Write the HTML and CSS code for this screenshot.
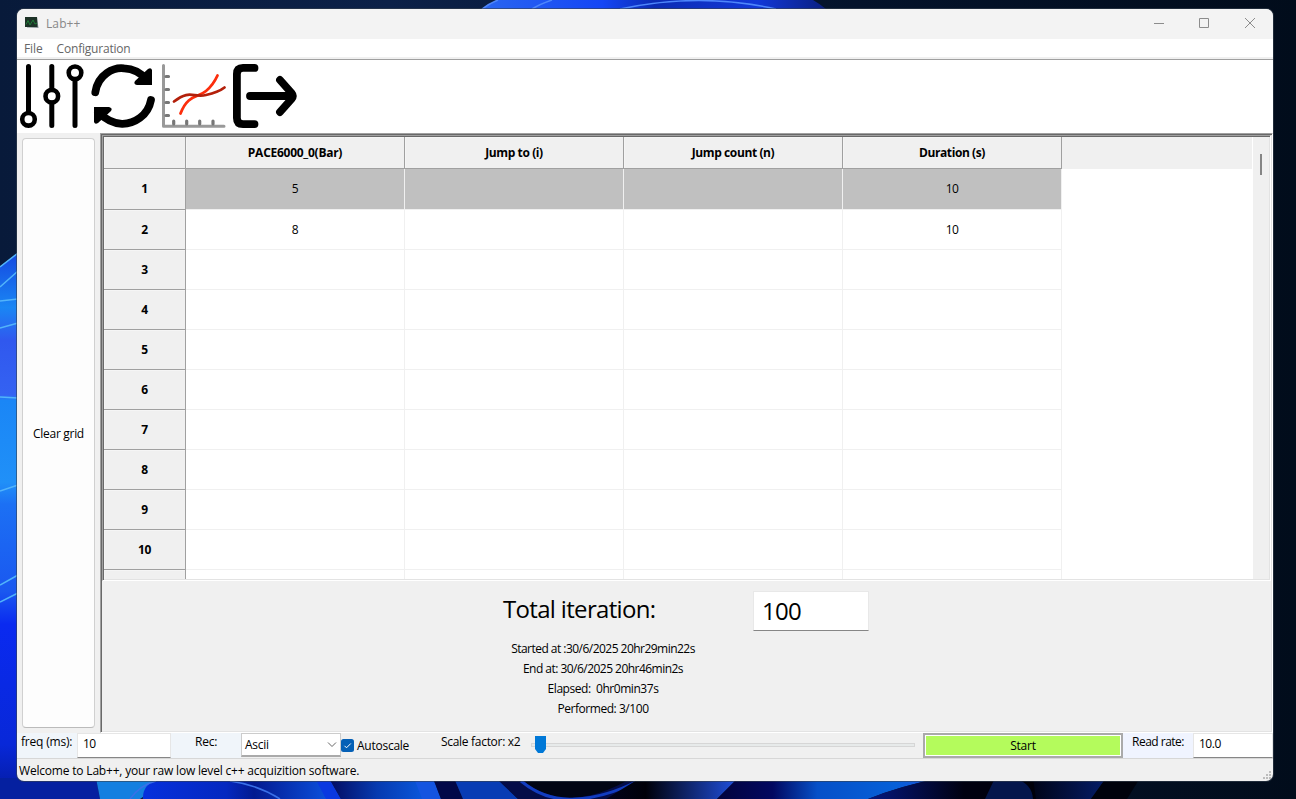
FILE: index.html
```html
<!DOCTYPE html>
<html lang="en">
<head>
<meta charset="utf-8">
<title>Lab++</title>
<link rel="stylesheet" href="styles.css">
</head>
<body>
<div class="desktop">
  <svg class="wallpaper" viewBox="0 0 1296 799" preserveAspectRatio="none">
    <defs>
      <linearGradient id="night" x1="0" x2="1"><stop offset="0" stop-color="#081a3a"/><stop offset=".3" stop-color="#0c2148"/><stop offset=".66" stop-color="#04132b"/><stop offset="1" stop-color="#010c1b"/></linearGradient>
      <linearGradient id="topBloom" x1="0" x2="1"><stop offset="0" stop-color="#2a66f0"/><stop offset=".35" stop-color="#1546f5"/><stop offset=".5" stop-color="#0c2cb4"/><stop offset=".8" stop-color="#1238d8"/><stop offset="1" stop-color="#0a1f80"/></linearGradient>
      <linearGradient id="leftBloom" x1="0" y1="0" x2="0" y2="1"><stop offset="0" stop-color="#1548e0"/><stop offset=".1" stop-color="#1a86f4"/><stop offset=".16" stop-color="#3058ee"/><stop offset=".26" stop-color="#3462f2"/><stop offset=".27" stop-color="#1a86f6"/><stop offset=".42" stop-color="#2090f8"/><stop offset=".46" stop-color="#1c70f4"/><stop offset=".62" stop-color="#1a58f0"/><stop offset=".68" stop-color="#0a2af0"/><stop offset=".9" stop-color="#0828d8"/><stop offset="1" stop-color="#041a9c"/></linearGradient>
      <linearGradient id="petalA" x1="0" x2="1"><stop offset="0" stop-color="#0630dc"/><stop offset=".45" stop-color="#0428c0"/><stop offset=".6" stop-color="#031a90"/><stop offset="1" stop-color="#0c50dc"/></linearGradient>
      <linearGradient id="petalB" x1="0" x2="1"><stop offset="0" stop-color="#030b60"/><stop offset=".5" stop-color="#063ab0"/><stop offset="1" stop-color="#0a58dc"/></linearGradient>
      <linearGradient id="petalC" x1="0" x2="1"><stop offset="0" stop-color="#01031c"/><stop offset=".3" stop-color="#000008"/><stop offset="1" stop-color="#2050e0"/></linearGradient>
      <linearGradient id="petalD" x1="0" x2="1"><stop offset="0" stop-color="#02033c"/><stop offset=".25" stop-color="#020860"/><stop offset=".45" stop-color="#0650c8"/><stop offset=".8" stop-color="#0660d8"/><stop offset="1" stop-color="#2450dc"/></linearGradient>
      <linearGradient id="petalE" x1="0" x2="1"><stop offset="0" stop-color="#041880"/><stop offset=".5" stop-color="#000010"/><stop offset="1" stop-color="#000008"/></linearGradient>
      <linearGradient id="petalF" x1="0" x2="1"><stop offset="0" stop-color="#000418"/><stop offset="1" stop-color="#041c68"/></linearGradient>
    </defs>
    <rect width="1296" height="799" fill="url(#night)"/>
    <path d="M482 9 Q490 3 498 0H813Q820 4 826 9Z" fill="url(#topBloom)"/>
    <path d="M482 9Q490 3 498 0M532 9Q540 4 552 0M620 9Q700-8 776 9" fill="none" stroke="#4e86fa" stroke-width="1.500"/>
    <path d="M0 267L18 253V799H0Z" fill="url(#leftBloom)"/>
    <path d="M0 267L18 253M0 287L18 271M0 301L18 299M0 328L18 323M0 397L18 398M0 491L18 485M0 585L18 575M0 602L18 593" fill="none" stroke="#52b4fa" stroke-width="1.500"/>
    <path d="M0 778H96L100 799H0Z" fill="#0520a0"/>
    <path d="M96 778H170L140 799H100Z" fill="#147fe0"/>
    <path d="M143 799Q142 784 160 778H320L328 799Z" fill="url(#petalA)"/>
    <path d="M130 799Q140 785 156 781M230 781Q258 785 280 799" fill="none" stroke="#3a70e8" stroke-width="1.500"/>
    <path d="M315 778H329L341 799H326Z" fill="#0a38e0"/>
    <path d="M329 778H416L425 799H341Z" fill="url(#petalB)"/>
    <path d="M414 778H433L441 799H422Z" fill="#1454e0"/>
    <path d="M433 778H454L463 799H441Z" fill="#020848"/>
    <path d="M454 778H496L518 799H463Z" fill="#083cb4"/>
    <path d="M496 778H650L610 799H518Z" fill="#040c48"/>
    <path d="M520 778H632Q590 802 558 797Q536 793 520 778Z" fill="#010514"/>
    <path d="M521 781Q545 801 575 799Q605 798 640 780" fill="none" stroke="#123cc0" stroke-width="3"/>
    <path d="M640 778H738L717 799H606Z" fill="url(#petalC)"/>
    <path d="M738 778H940Q900 786 868 799H717Z" fill="url(#petalD)"/>
    <path d="M940 778H1060V799H868Q900 786 940 778Z" fill="url(#petalE)"/>
    <path d="M995 778H1012Q1032 782 1033 799H985Z" fill="#04164c"/>
    <path d="M1033 778H1106L1091 799H1036Z" fill="url(#petalF)"/>
    <path d="M1106 778H1140L1127 799H1091Z" fill="#00020c"/>
  </svg>

  <main class="window">
    <header class="titlebar">
      <svg class="app-icon" viewBox="0 0 14 12"><path d="M1 1L12 0L13.500 11L2 10.500Z" fill="#8a9499"/><path d="M0 0H12L12.500 10H0Z" fill="#1c3226"/><path d="M1 7.500L3 3.500L5 8L8 3L10 7L12 6" fill="none" stroke="#1f7a36"/></svg>
      <span class="title">Lab++</span>
      <svg class="caption" viewBox="0 0 102 12"><path d="M0 6.500H10M45.500 1.500H54.500V10.500H45.500ZM91 1L101 11M101 1L91 11" fill="none" stroke="#8c8c8c"/></svg>
    </header>
    <nav class="menubar"><span>File</span><span class="config">Configuration</span></nav>
    <section class="toolbar">
      <svg class="tools" viewBox="0 0 300 73">
        <g fill="none" stroke="#000" stroke-linecap="round">
          <path d="M11.500 6.500V51M34.800 6.500V29M34.800 43V65.500M58 20V65.500" stroke-width="5"/>
          <g stroke-width="4.600"><circle cx="11.500" cy="59.300" r="6.300"/><circle cx="34.800" cy="36.200" r="6.300"/><circle cx="58" cy="12.800" r="6.300"/></g>
          <path d="M78.300 32.200C81 14 97 7 107 8.300C117 8.500 125 14 130 20M134 40C131 56 117 64 105 63.800C94 63.500 87 58 81 52" stroke-width="7.800"/>
          <path d="M237.500 7.900H226Q219.900 7.900 219.900 14V58Q219.900 64.100 226 64.100H237.500" stroke-width="7.800"/>
          <path d="M233 36H272M263 20L274.500 33Q277 36 274.500 39L263 52" stroke-width="7.800"/>
        </g>
        <path d="M135 10V25H120Q116 24 118 21L131 9Q134 7 135 10ZM77 62V47H92Q96 48 94 51L81 63Q78 65 77 62Z"/>
        <path d="M146.500 5.500V66.200H207" fill="none" stroke="#999" stroke-width="3" stroke-linecap="round" stroke-linejoin="round"/>
        <path d="M149 16.500H151.500M149 29.500H151.500M149 42.500H151.500M149 55.500H151.500M156.700 64V61M169.700 64V61M182.700 64V61M196 64V61" stroke="#777" stroke-width="3.200" stroke-linecap="round"/>
        <path d="M163.500 53.500C171 34 181 38 189 31C195 26 198 21 200.500 15.500" fill="none" stroke="#fc2e0d" stroke-width="2.800" stroke-linecap="round"/>
        <path d="M157 41.500C173 29 176 38 189 35C198 33 203 31 207.500 27.500" fill="none" stroke="#b3200b" stroke-width="2.800" stroke-linecap="round"/>
      </svg>
    </section>

    <div class="workspace">
      <aside class="side"><button class="clear">Clear grid</button></aside>
      <section class="panel">
        <div class="sheet">
          <div class="grid">
            <div class="row head"><b></b><b>PACE6000_0(Bar)</b><b>Jump to (i)</b><b>Jump count (n)</b><b>Duration (s)</b><i class="filler"></i></div>
            <div class="row selected"><b>1</b><span>5</span><span></span><span></span><span>10</span></div>
            <div class="row"><b>2</b><span>8</span><span></span><span></span><span>10</span></div>
            <div class="row"><b>3</b><span></span><span></span><span></span><span></span></div>
            <div class="row"><b>4</b><span></span><span></span><span></span><span></span></div>
            <div class="row"><b>5</b><span></span><span></span><span></span><span></span></div>
            <div class="row"><b>6</b><span></span><span></span><span></span><span></span></div>
            <div class="row"><b>7</b><span></span><span></span><span></span><span></span></div>
            <div class="row"><b>8</b><span></span><span></span><span></span><span></span></div>
            <div class="row"><b>9</b><span></span><span></span><span></span><span></span></div>
            <div class="row"><b>10</b><span></span><span></span><span></span><span></span></div>
            <div class="row"><b></b><span></span><span></span><span></span><span></span></div>
          </div>
          <div class="scrollbar"><div class="thumb"></div></div>
        </div>
        <div class="summary">
          <div class="progress">
            <h1>Total iteration:</h1>
            <p>Started at :30/6/2025 20hr29min22s</p>
            <p>End at: 30/6/2025 20hr46min2s</p>
            <p>Elapsed:&nbsp; 0hr0min37s</p>
            <p>Performed: 3/100</p>
          </div>
          <div class="total">100</div>
        </div>
      </section>
    </div>

    <section class="controls">
      <label class="tint freq">freq (ms):</label>
      <div class="field">10</div>
      <label class="tint rec">Rec:</label>
      <div class="combo"><span>Ascii</span><svg viewBox="0 0 10 6"><path d="M1 .5L5 4.500L9 .5" fill="none" stroke="#666"/></svg></div>
      <div class="check"><svg viewBox="0 0 13 13"><rect width="13" height="13" rx="2.500" fill="#0560b6"/><path d="M3.500 6.800L5.500 8.800L9.800 4.500" fill="none" stroke="#fff"/></svg><span>Autoscale</span></div>
      <label class="scale">Scale factor: x2</label>
      <div class="slider"><div class="track"></div><svg class="knob" viewBox="0 0 11 17"><path d="M0 0H11V13L8 17H3L0 13Z" fill="#0078d7"/></svg></div>
      <button class="start">Start</button>
      <label class="tint read">Read rate:</label>
      <div class="field">10.0</div>
    </section>
    <footer class="status"><span>Welcome to Lab++, your raw low level c++ acquizition software.</span>
      <svg class="grip" viewBox="0 0 8 8"><path d="M6 0h2v2H6zM3 3h2v2H3zM6 3h2v2H6zM0 6h2v2H0zM3 6h2v2H3zM6 6h2v2H6z" fill="#bcbcbc"/></svg>
    </footer>
  </main>
</div>
</body>
</html>
```
FILE: styles.css
```css
* { box-sizing: border-box; }
body { margin: 0; font: 12px/16px "Open Sans", "Noto Sans", sans-serif; letter-spacing: -0.25px; color: #000; overflow: hidden; }
button { font: inherit; letter-spacing: inherit; color: inherit; padding: 0; }
.desktop { display: grid; width: 1296px; height: 799px; }
.wallpaper, .window { grid-area: 1 / 1; }
.wallpaper { width: 1296px; height: 799px; }
.window { z-index: 1; margin: 9px 0 0 17px; width: 1256px; height: 772px; border-radius: 7px; overflow: hidden; background: #f0f0f0; display: grid; grid-template-rows: 30px 21px 73px 600px 25px 23px; box-shadow: 0 0 0 1px #36414e99; }

.titlebar { background: #f3f3f3; display: flex; align-items: center; padding: 0 17px 0 8px; color: #888; }
.app-icon { width: 14px; height: 12px; margin-bottom: 2px; }
.title { margin: 0 auto 0 7px; letter-spacing: .1px; }
.caption { width: 102px; height: 12px; margin-bottom: 2px; }
.menubar { background: linear-gradient(#fff 18px, #f0f0f0 18px 20px, #a0a0a0 20px); display: flex; gap: 14px; padding: 2px 7px; color: #666; letter-spacing: -.1px; }
.config { letter-spacing: -.2px; }
.toolbar { background: #fff; }
.tools { display: block; width: 300px; height: 73px; }

.workspace { display: grid; grid-template-columns: 83px 1173px; }
.side { padding: 5px; display: flex; }
.clear { width: 73px; background: #fdfdfd; border: 1px solid #d0d0d0; border-bottom-color: #bbb; border-radius: 4px; padding-top: 1px; letter-spacing: -.3px; }
.panel, .sheet { display: grid; padding: 1px; border: 1px solid; border-color: #a0a0a0 #fff #fff #a0a0a0; box-shadow: inset 1px 1px #696969, inset -1px -1px #e3e3e3; }
.panel { grid-template-rows: 446px 150px; }
.sheet { grid-template-columns: 1149px 16px; height: 446px; }
.grid { background: #fff; overflow: hidden; height: 442px; }
.row { display: grid; grid-template-columns: 82px repeat(4, 219px) 190px; height: 40px; }
.row > * { display: flex; align-items: center; justify-content: center; border-right: 1px solid #f0f0f0; border-bottom: 1px solid #f0f0f0; }
.row > span { letter-spacing: -.6px; }
.row > b { background: #f0f0f0; border-color: #a0a0a0; box-shadow: inset 1px 1px #f5f5f5; letter-spacing: -.25px; }
.head > b { letter-spacing: -.27px; }
.head > b:nth-child(n+3) { letter-spacing: -.4px; }
.head { height: 32px; }
.row > .filler { background: #f0f0f0; border: 0; }
.selected { height: 41px; }
.selected > span { background: #c0c0c0; }
.scrollbar { background: #f0f0f0; padding: 17px 0 0 7px; }
.thumb { width: 2px; height: 21px; background: #858585; }

.summary { display: flex; padding-left: 400px; height: 150px; }
.progress { width: 202px; text-align: center; }
.progress h1 { margin: 12px 0 14px 1px; font-size: 24px; line-height: 32px; font-weight: 400; text-align: left; white-space: nowrap; letter-spacing: -.67px; }
.progress p { margin: 0; line-height: 20px; white-space: nowrap; letter-spacing: -.53px; }
.progress p:nth-of-type(n+3) { letter-spacing: -.45px; }
.total { margin: 10px 0 0 49px; width: 116px; height: 40px; background: #fff; border: 1px solid #e8e8e8; border-bottom-color: #868686; padding-left: 8px; font-size: 24px; line-height: 38px; letter-spacing: -.7px; }

.controls { display: grid; grid-template-columns: 60px 94px 70px 100px 83px 107px 392px 200px 70px 80px; background: #f0f0f0; }
.controls > label { line-height: 17px; white-space: nowrap; }
.tint { background: #f0f5fa; }
.freq { padding-left: 4px; letter-spacing: -.2px; }
.rec { padding-left: 24px; }
.scale { padding-left: 17px; letter-spacing: -.3px; }
.controls > .read { padding-left: 9px; background: #f0f4ff; letter-spacing: -.5px; }
.field { background: #fff; border: 1px solid #e6e6e6; border-bottom-color: #868686; padding: 2px 5px; letter-spacing: -.5px; }
.combo { background: #fff; border: 1px solid #ccc; border-bottom: 2px solid #aaa; display: flex; align-items: center; justify-content: space-between; padding: 0 3px; height: 24px; }
.combo svg { width: 10px; height: 6px; }
.check { display: flex; align-items: center; gap: 3px; }
.check svg { width: 13px; height: 13px; }
.slider { display: grid; padding: 3px 8px 0 0; align-items: start; }
.slider > * { grid-area: 1 / 1; }
.track { height: 4px; margin-top: 7px; background: #e7eaea; border: 1px solid #d6d6d6; }
.knob { width: 11px; height: 17px; margin-left: 4px; z-index: 1; }
.start { background: #b4fb5c; border: 2px solid #aaa; box-shadow: inset 0 0 0 1px #fff; }
.status { border-top: 1px solid #d7d7d7; padding: 4px 2px; display: flex; justify-content: space-between; line-height: 16px; letter-spacing: -.19px; }
.grip { width: 8px; height: 8px; margin-top: 8px; }
```
